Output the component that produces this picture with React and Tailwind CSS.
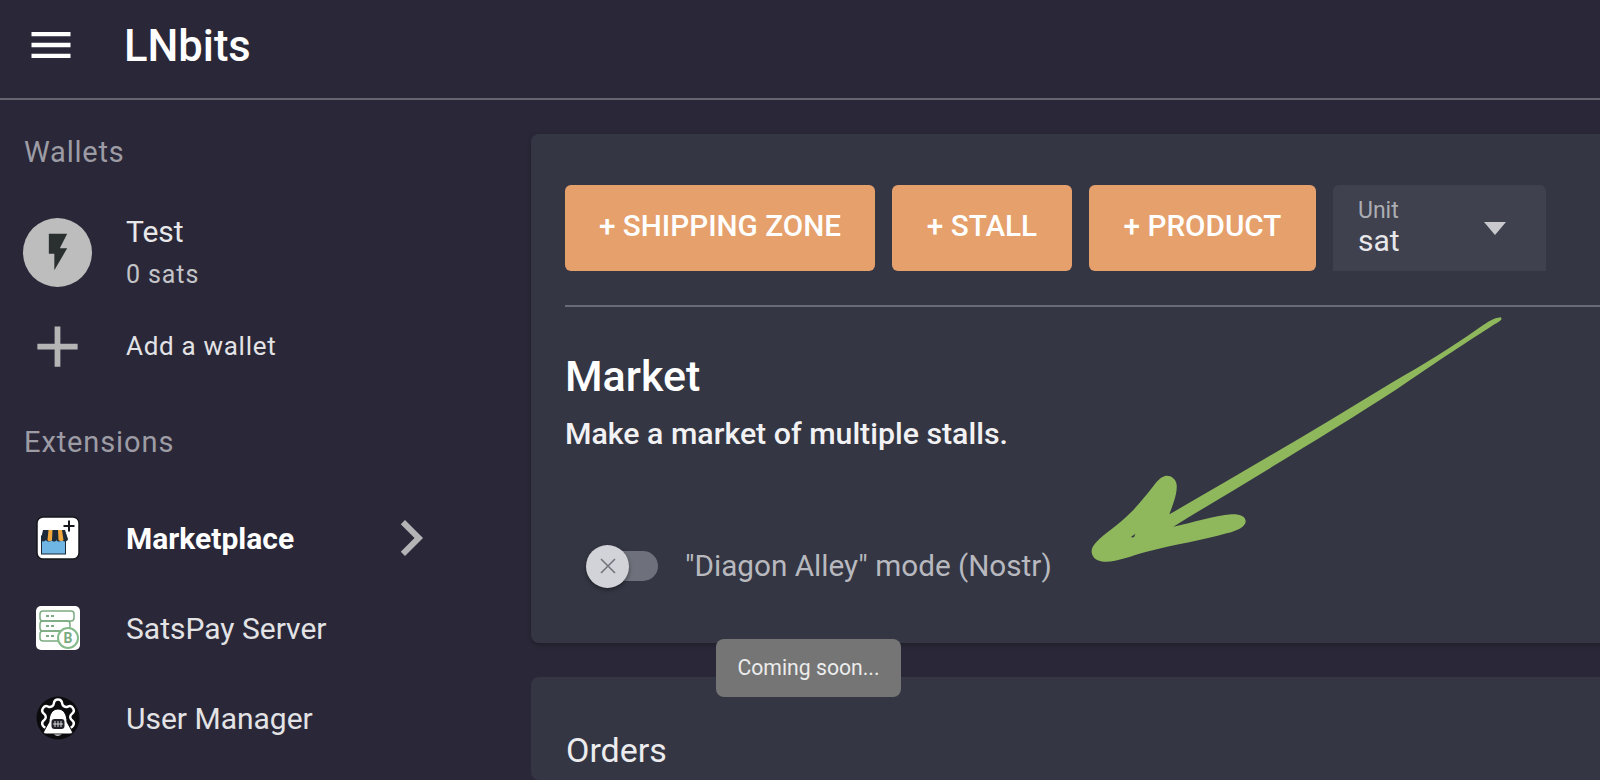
import React from 'react';
import { Settings } from 'lucide-react';

const MarketIcon = () => (
  <svg width="44" height="44" viewBox="0 0 44 44" className="shrink-0">
    <rect x="1" y="1" width="42" height="42" rx="6" fill="#ffffff" stroke="#15171c" strokeWidth="1.500" />
    <rect x="5.500" y="20" width="24" height="18" fill="#6fb6e4" stroke="#1c2733" strokeWidth="1" />
    <path d="M7 14h22l3 9c0 3-5 3-6.500 1c-1 2-4 2-5 0c-1 2-4 2-5 0c-1 2-4.500 2-5.500 0c-1 2-6 2-5-1z" fill="#1e2b3a" />
    <path d="M12.500 14h4l-.5 10c-1 1.500-4 1.500-4.500 0zM22 14h4l1.500 10c-.5 1.500-4 1.500-5 0z" fill="#f0a73e" />
    <path d="M33 4.500v11M27.500 10h11" stroke="#15171c" strokeWidth="2" />
  </svg>
);

const SatsPayIcon = () => (
  <svg width="44" height="44" viewBox="0 0 44 44" className="shrink-0">
    <rect x="0" y="0" width="44" height="44" rx="5" fill="#ffffff" />
    <g fill="none" stroke="#7bab80" strokeWidth="1.500">
      <rect x="4" y="5" width="34" height="10" rx="3" />
      <rect x="4" y="15" width="30" height="10" rx="3" />
      <rect x="4" y="25" width="24" height="10" rx="3" />
    </g>
    <g fill="#7bab80">
      <rect x="10" y="9" width="3" height="2" />
      <rect x="15" y="9" width="3" height="2" />
      <rect x="10" y="19" width="3" height="2" />
      <rect x="15" y="19" width="3" height="2" />
      <rect x="10" y="29" width="3" height="2" />
      <rect x="15" y="29" width="3" height="2" />
    </g>
    <circle cx="32" cy="32" r="10" fill="#ffffff" stroke="#84b98a" strokeWidth="2" />
    <text x="32" y="37" textAnchor="middle" fontSize="14" fontWeight="700" fontFamily="Roboto, sans-serif" fill="#7bab80">B</text>
  </svg>
);

const UserManagerIcon = () => (
  <svg width="44" height="44" viewBox="0 0 44 44" className="shrink-0">
    <circle cx="22" cy="22" r="21.500" fill="#0b0b0e" />
    <Settings x="1" y="0" width="42" height="42" color="#ffffff" strokeWidth={1.400} />
    <path d="M22 13c-6 0-9 6-9 13l-5 9c-1 2 0 3 2 3h24c2 0 3-1 2-3l-5-9c0-7-3-13-9-13z" fill="#ffffff" stroke="#0b0b0e" strokeWidth="1" />
    <rect x="15.500" y="23" width="13" height="10" rx="3" fill="#22222a" />
    <path d="M19 25v6M22 25v6M25 25v6M17 28h10" stroke="#ffffff" strokeWidth=".8" />
  </svg>
);

const NavRow = ({ icon, label, bold, chevron }) => (
  <div className="flex items-center pl-[36px] h-[90px]">
    <div className="w-[90px] shrink-0">{icon}</div>
    <span className={`text-[30px] ${bold ? 'font-bold text-white' : 'text-[#e3e3e6]'}`}>{label}</span>
    {chevron && (
      <svg width="72" height="72" viewBox="0 0 24 24" fill="#b4b4b6" className="ml-auto mr-[84px]">
        <path d="M10 6L8.590 7.410 13.170 12l-4.580 4.590L10 18l6-6z" />
      </svg>
    )}
  </div>
);

const Sidebar = () => (
  <aside className="w-[531px] shrink-0 flex flex-col">
    <div className="pl-[24px] pt-[32px] text-[29px] leading-[40px] tracking-[0.8px] text-[#9d9ca5]">Wallets</div>

    {/* wallet */}
    <div className="flex items-center pl-[23px] mt-[45px] h-[70px]">
      <div className="w-[69px] h-[69px] rounded-full bg-[#bdbdbd] flex items-center justify-center shrink-0">
        <svg width="44" height="44" viewBox="0 0 24 24" fill="#2a2f2f">
          <path d="M7 2v11h3v9l7-12h-4l4-8z" />
        </svg>
      </div>
      <div className="ml-[34px] flex flex-col">
        <span className="text-[30px] leading-[40px] text-[#e8e8ea]">Test</span>
        <span className="text-[25px] leading-[36px] tracking-[0.9px] text-[#c4c4c8] mt-[5px]">0 sats</span>
      </div>
    </div>

    <div className="flex items-center mt-[37px] h-[44px]">
      <svg width="69" height="69" viewBox="0 0 24 24" fill="#b5b5b5" className="ml-[23px] shrink-0">
        <path d="M19 13h-6v6h-2v-6H5v-2h6V5h2v6h6v2z" />
      </svg>
      <span className="ml-[34px] text-[26px] tracking-[0.7px] text-[#e3e3e6]">Add a wallet</span>
    </div>

    <div className="pl-[24px] mt-[54px] text-[29px] leading-[40px] tracking-[0.9px] text-[#9d9ca5]">Extensions</div>

    <div className="mt-[31px] flex flex-col">
      <NavRow icon={<MarketIcon />} label="Marketplace" bold chevron />
      <NavRow icon={<SatsPayIcon />} label="SatsPay Server" />
      <NavRow icon={<UserManagerIcon />} label="User Manager" />
    </div>
  </aside>
);

const Toggle = () => (
  <div className="relative w-[72px] h-[43px] flex items-center shrink-0">
    <div className="ml-[14px] w-[58px] h-[30px] rounded-full bg-[#6e707b]" />
    <div className="absolute left-0 top-0 w-[43px] h-[43px] rounded-full bg-[#d2d3d8] shadow-[0_2px_4px_rgba(0,0,0,0.4)] flex items-center justify-center">
      <svg width="24" height="24" viewBox="0 0 24 24" fill="none" stroke="#6f7079" strokeWidth="1.500">
        <path d="M5 5l14 14M19 5L5 19" />
      </svg>
    </div>
  </div>
);

const MainPanel = () => (
  <main className="flex-1 min-w-0 pt-[34px] flex flex-col gap-[34px]">
    <section className="h-[509px] -mr-[20px] rounded-l-[8px] bg-[#343643] shadow-[0_2px_4px_rgba(0,0,0,0.25)] pt-[51px] pl-[34px]">
      <div className="flex items-stretch h-[86px] text-[29.7px] font-medium text-white">
        <button className="w-[310px] pb-[3px] rounded-[6px] bg-[#e5a06c]">+ SHIPPING ZONE</button>
        <button className="w-[180px] ml-[17px] pb-[3px] rounded-[6px] bg-[#e5a06c]">+ STALL</button>
        <button className="w-[227px] ml-[17px] pb-[3px] rounded-[6px] bg-[#e5a06c]">+ PRODUCT</button>
        <div className="w-[213px] ml-[17px] rounded-t-[6px] bg-[#3f414e] pl-[25px] pr-[40px] flex items-center justify-between font-normal">
          <div className="flex flex-col">
            <span className="text-[23px] leading-[26px] text-[#acadb3]">Unit</span>
            <span className="text-[30px] leading-[34px] text-[#e8e8ea]">sat</span>
          </div>
          <div className="w-0 h-0 border-l-[11px] border-r-[11px] border-t-[13px] border-l-transparent border-r-transparent border-t-[#c9c9cd]" />
        </div>
      </div>

      <div className="mt-[34px] h-[2px] bg-[#6a6b76]" />

      <h1 className="mt-[41px] text-[43px] leading-[56px] font-medium text-white">Market</h1>
      <p className="mt-[12px] text-[30.3px] leading-[36px] font-medium text-[#f2f2f4]">Make a market of multiple stalls.</p>

      <div className="mt-[92px] ml-[21px] flex items-center">
        <Toggle />
        <span className="ml-[27px] text-[29.7px] text-[#b8b9bf]">"Diagon Alley" mode (Nostr)</span>
      </div>
    </section>

    <section className="flex-1 -mr-[20px] rounded-l-[8px] bg-[#343643] pl-[35px] pt-[51px]">
      <h2 className="text-[34px] leading-[44px] text-[#ececef]">Orders</h2>
    </section>
  </main>
);

export default function App() {
  return (
    <div className="relative w-[1600px] h-[780px] overflow-hidden bg-[#2a2838] font-['Roboto',sans-serif]">
      <header className="h-[100px] pb-[8px] flex items-center border-b-2 border-[#65646f]">
        <svg width="52" height="52" viewBox="0 0 24 24" fill="#ffffff" className="ml-[25px] shrink-0">
          <path d="M3 18h18v-2H3v2zm0-5h18v-2H3v2zm0-7v2h18V6H3z" />
        </svg>
        <span className="ml-[47px] mt-[3px] text-[43.5px] font-medium text-white">LNbits</span>
      </header>

      <div className="flex h-[680px]">
        <Sidebar />
        <MainPanel />
      </div>

      {/* tooltip */}
      <div className="absolute left-[716px] top-[639px] w-[185px] h-[58px] rounded-[8px] bg-[#757575] flex items-center justify-center text-[21.2px] text-[#ececec]">
        Coming soon...
      </div>

      {/* green annotation arrow */}
      <svg className="absolute left-[1060px] top-[300px]" width="460" height="280" viewBox="0 0 1380 840" fill="#8fb85d">
        <path
          fillRule="evenodd"
          d="M1322 52C1300 54 1285 65 1260 82C1170 145 1090 195 1000 245C780 380 550 515 328 643C340 610 352 580 350 555C348 535 330 525 315 528C300 532 290 545 275 565C255 590 235 615 210 640C175 675 135 700 110 725C95 740 90 755 100 770C110 785 135 788 165 782C200 775 220 765 260 755C340 735 430 720 500 700C530 692 555 682 557 665C558 650 540 642 515 643C460 648 400 668 340 680C560 545 800 405 1010 268C1130 185 1230 120 1300 75C1318 65 1330 58 1322 52ZM212 712L226 701L222 712Z"
        />
      </svg>
    </div>
  );
}
